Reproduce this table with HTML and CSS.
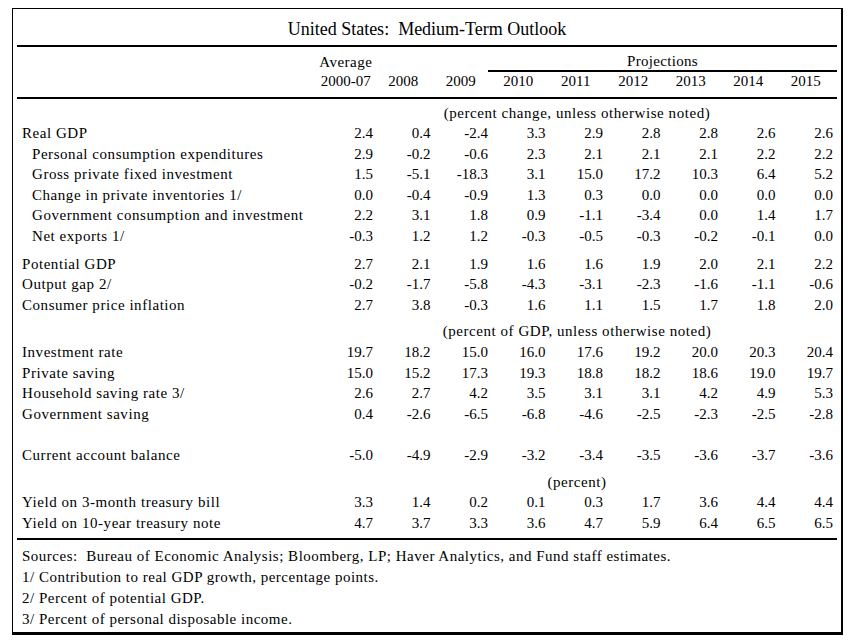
FILE: index.html
```html
<!DOCTYPE html>
<html lang="en">
<head>
<meta charset="utf-8">
<title>United States: Medium-Term Outlook</title>
<link rel="stylesheet" href="styles.css">
</head>
<body>
<div class="box">
  <div class="title">United States:&nbsp; Medium-Term Outlook</div>

  <div class="head">
    <div class="hc word c2 r1">Average</div>
    <div class="proj">Projections</div>
    <div class="hc c2 r2">2000-07</div>
    <div class="hc c3 r2">2008</div>
    <div class="hc c4 r2">2009</div>
    <div class="hc c5 r2">2010</div>
    <div class="hc c6 r2">2011</div>
    <div class="hc c7 r2">2012</div>
    <div class="hc c8 r2">2013</div>
    <div class="hc c9 r2">2014</div>
    <div class="hc c10 r2">2015</div>
  </div>

  <div class="tbody">
    <div class="row"><div class="unit">(percent change, unless otherwise noted)</div></div>
    <div class="row"><div class="lab">Real GDP</div><div class="n">2.4</div><div class="n">0.4</div><div class="n">-2.4</div><div class="n">3.3</div><div class="n">2.9</div><div class="n">2.8</div><div class="n">2.8</div><div class="n">2.6</div><div class="n">2.6</div></div>
    <div class="row"><div class="lab ind">Personal consumption expenditures</div><div class="n">2.9</div><div class="n">-0.2</div><div class="n">-0.6</div><div class="n">2.3</div><div class="n">2.1</div><div class="n">2.1</div><div class="n">2.1</div><div class="n">2.2</div><div class="n">2.2</div></div>
    <div class="row"><div class="lab ind">Gross private fixed investment</div><div class="n">1.5</div><div class="n">-5.1</div><div class="n">-18.3</div><div class="n">3.1</div><div class="n">15.0</div><div class="n">17.2</div><div class="n">10.3</div><div class="n">6.4</div><div class="n">5.2</div></div>
    <div class="row"><div class="lab ind">Change in private inventories 1/</div><div class="n">0.0</div><div class="n">-0.4</div><div class="n">-0.9</div><div class="n">1.3</div><div class="n">0.3</div><div class="n">0.0</div><div class="n">0.0</div><div class="n">0.0</div><div class="n">0.0</div></div>
    <div class="row"><div class="lab ind">Government consumption and investment</div><div class="n">2.2</div><div class="n">3.1</div><div class="n">1.8</div><div class="n">0.9</div><div class="n">-1.1</div><div class="n">-3.4</div><div class="n">0.0</div><div class="n">1.4</div><div class="n">1.7</div></div>
    <div class="row"><div class="lab ind">Net exports 1/</div><div class="n">-0.3</div><div class="n">1.2</div><div class="n">1.2</div><div class="n">-0.3</div><div class="n">-0.5</div><div class="n">-0.3</div><div class="n">-0.2</div><div class="n">-0.1</div><div class="n">0.0</div></div>

    <div class="row sep7"><div class="lab">Potential GDP</div><div class="n">2.7</div><div class="n">2.1</div><div class="n">1.9</div><div class="n">1.6</div><div class="n">1.6</div><div class="n">1.9</div><div class="n">2.0</div><div class="n">2.1</div><div class="n">2.2</div></div>
    <div class="row"><div class="lab">Output gap 2/</div><div class="n">-0.2</div><div class="n">-1.7</div><div class="n">-5.8</div><div class="n">-4.3</div><div class="n">-3.1</div><div class="n">-2.3</div><div class="n">-1.6</div><div class="n">-1.1</div><div class="n">-0.6</div></div>
    <div class="row"><div class="lab">Consumer price inflation</div><div class="n">2.7</div><div class="n">3.8</div><div class="n">-0.3</div><div class="n">1.6</div><div class="n">1.1</div><div class="n">1.5</div><div class="n">1.7</div><div class="n">1.8</div><div class="n">2.0</div></div>

    <div class="row sep6"><div class="unit">(percent of GDP, unless otherwise noted)</div></div>
    <div class="row"><div class="lab">Investment rate</div><div class="n">19.7</div><div class="n">18.2</div><div class="n">15.0</div><div class="n">16.0</div><div class="n">17.6</div><div class="n">19.2</div><div class="n">20.0</div><div class="n">20.3</div><div class="n">20.4</div></div>
    <div class="row"><div class="lab">Private saving</div><div class="n">15.0</div><div class="n">15.2</div><div class="n">17.3</div><div class="n">19.3</div><div class="n">18.8</div><div class="n">18.2</div><div class="n">18.6</div><div class="n">19.0</div><div class="n">19.7</div></div>
    <div class="row"><div class="lab">Household saving rate 3/</div><div class="n">2.6</div><div class="n">2.7</div><div class="n">4.2</div><div class="n">3.5</div><div class="n">3.1</div><div class="n">3.1</div><div class="n">4.2</div><div class="n">4.9</div><div class="n">5.3</div></div>
    <div class="row"><div class="lab">Government saving</div><div class="n">0.4</div><div class="n">-2.6</div><div class="n">-6.5</div><div class="n">-6.8</div><div class="n">-4.6</div><div class="n">-2.5</div><div class="n">-2.3</div><div class="n">-2.5</div><div class="n">-2.8</div></div>
    <div class="row"></div>
    <div class="row"><div class="lab">Current account balance</div><div class="n">-5.0</div><div class="n">-4.9</div><div class="n">-2.9</div><div class="n">-3.2</div><div class="n">-3.4</div><div class="n">-3.5</div><div class="n">-3.6</div><div class="n">-3.7</div><div class="n">-3.6</div></div>

    <div class="row sep6"><div class="unit">(percent)</div></div>
    <div class="row"><div class="lab">Yield on 3-month treasury bill</div><div class="n">3.3</div><div class="n">1.4</div><div class="n">0.2</div><div class="n">0.1</div><div class="n">0.3</div><div class="n">1.7</div><div class="n">3.6</div><div class="n">4.4</div><div class="n">4.4</div></div>
    <div class="row"><div class="lab">Yield on 10-year treasury note</div><div class="n">4.7</div><div class="n">3.7</div><div class="n">3.3</div><div class="n">3.6</div><div class="n">4.7</div><div class="n">5.9</div><div class="n">6.4</div><div class="n">6.5</div><div class="n">6.5</div></div>
  </div>

  <div class="notes">
    <div class="note">Sources:&nbsp; Bureau of Economic Analysis; Bloomberg, LP; Haver Analytics, and Fund staff estimates.</div>
    <div class="note">1/ Contribution to real GDP growth, percentage points.</div>
    <div class="note">2/ Percent of potential GDP.</div>
    <div class="note">3/ Percent of personal disposable income.</div>
  </div>
</div>
</body>
</html>
```

FILE: styles.css
```css
html, body {
  background: #ffffff;
}

body {
  margin: 8px 0 0 12px;
  font-family: "Liberation Serif", "Times New Roman", serif;
  font-size: 15px;
  color: #000000;
}

.box {
  width: 820px;
  padding: 0 4px;
  border-top: 1px solid #000;
  border-left: 1px solid #000;
  border-right: 2px solid #000;
  border-bottom: 3px solid #000;
}

.title {
  font-size: 18px;
  line-height: 20px;
  text-align: center;
  padding: 10px 0 6px;
  border-bottom: 2px solid #000;
  white-space: pre;
}

.head,
.row {
  display: grid;
  grid-template-columns: 300px repeat(9, 57.5px) 2.5px;
}

.head {
  grid-template-rows: 19px 18px;
  padding: 6px 0 7px;
  border-bottom: 2px solid #000;
  line-height: 18px;
}

.hc {
  text-align: center;
  white-space: nowrap;
}

.word {
  letter-spacing: 0.5px;
}

.r1 { grid-row: 1; }
.r2 { grid-row: 2; }
.c2 { grid-column: 2; }
.c3 { grid-column: 3; }
.c4 { grid-column: 4; }
.c5 { grid-column: 5; }
.c6 { grid-column: 6; }
.c7 { grid-column: 7; }
.c8 { grid-column: 8; }
.c9 { grid-column: 9; }
.c10 { grid-column: 10; }

.proj {
  grid-row: 1;
  grid-column: 5 / 12;
  text-align: center;
  line-height: 17px;
  border-bottom: 2px solid #000;
  margin-left: -1.5px;
  letter-spacing: 0.3px;
}

.tbody {
  padding: 3.5px 0 4.5px;
  border-bottom: 2px solid #000;
}

.row {
  height: 20.6px;
  line-height: 20.6px;
}

.sep7 { margin-top: 7px; }
.sep6 { margin-top: 6px; }

.lab {
  grid-column: 1;
  padding-left: 5px;
  white-space: nowrap;
  letter-spacing: 0.55px;
}

.lab.ind {
  padding-left: 15px;
}

.n {
  text-align: right;
  padding-right: 1.5px;
  white-space: nowrap;
}

.unit {
  grid-column: 2 / 12;
  text-align: center;
  white-space: nowrap;
  letter-spacing: 0.55px;
}

.notes {
  padding: 6px 0 2px;
}

.note {
  height: 21px;
  line-height: 21px;
  padding-left: 5px;
  white-space: nowrap;
  letter-spacing: 0.5px;
}
```
